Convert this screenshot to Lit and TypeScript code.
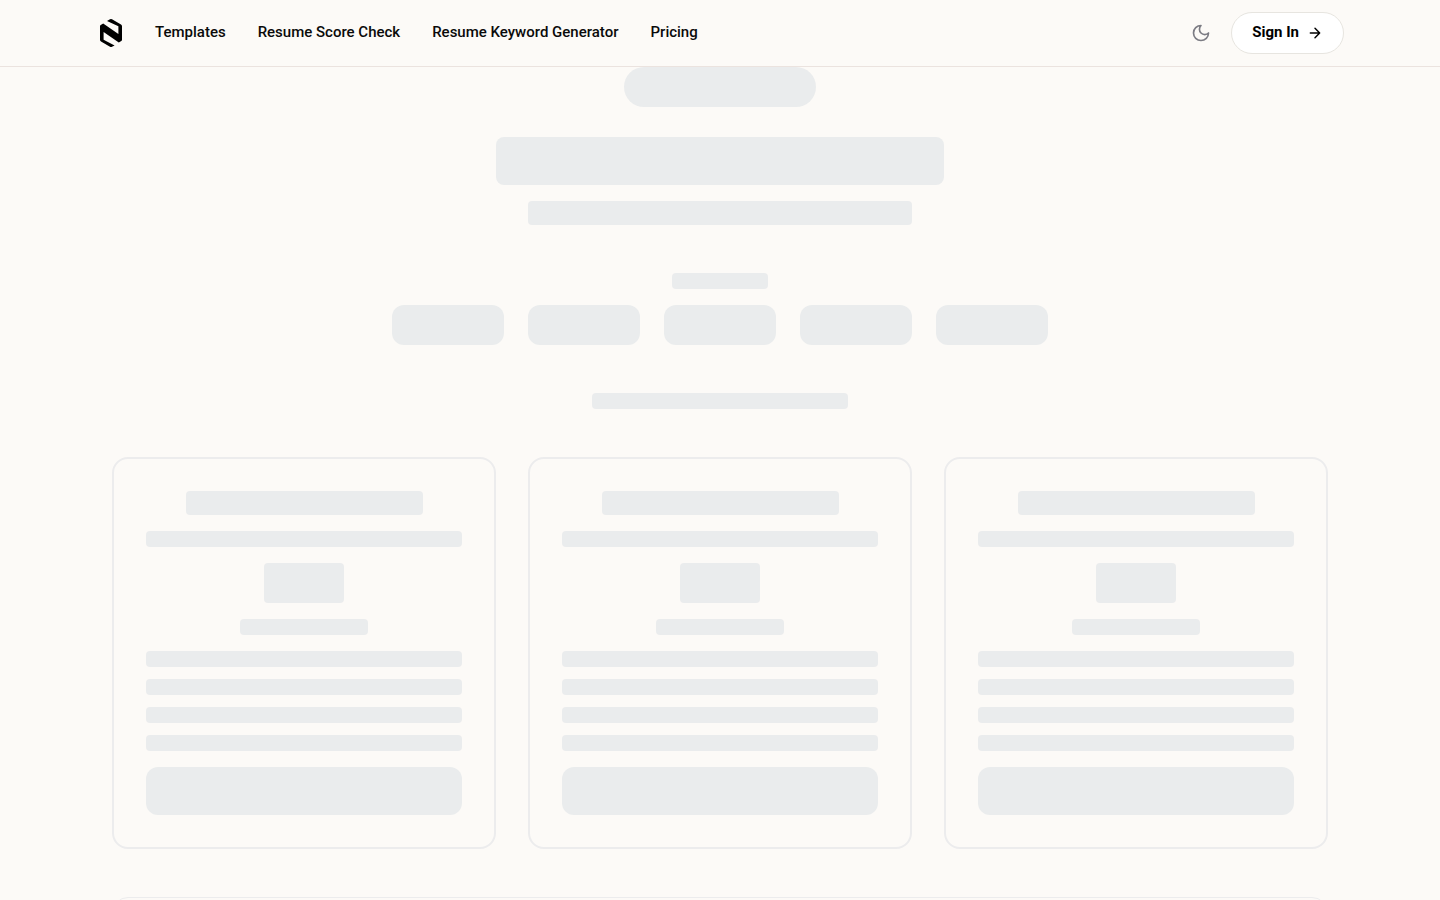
import { LitElement, html, css } from "lit";
import { customElement } from "lit/decorators.js";

const LINKS = ["Templates", "Resume Score Check", "Resume Keyword Generator", "Pricing"];

@customElement("site-header")
export class SiteHeader extends LitElement {
  static styles = css`
    :host {
      display: block;
      border-bottom: 1px solid #ebe3df;
      background: #fcfaf7;
    }
    .bar {
      box-sizing: border-box;
      display: flex;
      align-items: center;
      max-width: 1280px;
      margin: 0 auto;
      padding: 12px 16px;
    }
    .logo {
      display: flex;
      margin-right: 28px;
    }
    nav {
      display: flex;
      gap: 32px;
      flex: 1;
    }
    nav a {
      color: #0a0a0a;
      font-size: 15px;
      font-weight: 500;
      line-height: 22px;
      padding-bottom: 2px;
      text-decoration: none;
      white-space: nowrap;
    }
    .actions {
      display: flex;
      align-items: center;
      gap: 12px;
    }
    button {
      font: inherit;
      cursor: pointer;
    }
    .theme {
      display: flex;
      padding: 8px;
      border: 0;
      background: none;
      color: #7c7c84;
    }
    .signin {
      display: flex;
      align-items: center;
      gap: 8px;
      height: 42px;
      padding: 0 20px;
      border: 1px solid #e7e5e0;
      border-radius: 21px;
      background: #fff;
      color: #000;
      font-size: 15px;
      font-weight: 700;
    }
    .signin span {
      line-height: 22px;
      padding-bottom: 2px;
    }
  `;

  render() {
    return html`
      <div class="bar">
        <a class="logo" href="#" aria-label="Home">
          <svg width="31" height="30" viewBox="0 0 31 30" aria-hidden="true">
            <path d="M11 3.1 14 1.3Q15 .8 16 1.3L25 6.5Q26 7.1 26 8.2V21.8Q26 22.6 25.3 23L22.8 24.4 7.6 14V21.7L18.6 27.4 16 28.8Q15 29.3 14 28.8L5 23.5Q4 22.9 4 21.8V8.2Q4 7.4 4.7 7L7.2 5.6 22.4 16V8.3Z" />
          </svg>
        </a>
        <nav>${LINKS.map((label) => html`<a href="#">${label}</a>`)}</nav>
        <div class="actions">
          <button class="theme" aria-label="Toggle theme">
            <svg width="20" height="20" viewBox="0 0 24 24" fill="none" stroke="currentColor" stroke-width="2" stroke-linecap="round" stroke-linejoin="round">
              <path d="M12 3a6 6 0 0 0 9 9 9 9 0 1 1-9-9Z" />
            </svg>
          </button>
          <button class="signin">
            <span>Sign In</span>
            <svg width="16" height="16" viewBox="0 0 24 24" fill="none" stroke="currentColor" stroke-width="2.2" stroke-linecap="round" stroke-linejoin="round" aria-hidden="true">
              <path d="M5 12h14M12 5l7 7-7 7" />
            </svg>
          </button>
        </div>
      </div>
    `;
  }
}

@customElement("plan-skeleton")
export class PlanSkeleton extends LitElement {
  static styles = css`
    :host {
      display: flex;
      flex-direction: column;
      align-items: center;
      gap: 16px;
      padding: 32px;
      border: 2px solid #ececed;
      border-radius: 16px;
    }
    .bone {
      height: 16px;
      border-radius: 4px;
      background: #eaeced;
    }
    .name {
      width: 75%;
      height: 24px;
    }
    .line {
      width: 100%;
    }
    .price {
      width: 80px;
      height: 40px;
    }
    .note {
      width: 128px;
    }
    .features {
      display: grid;
      gap: 12px;
      width: 100%;
    }
    .action {
      width: 100%;
      height: 48px;
      border-radius: 12px;
    }
  `;

  render() {
    return html`
      <div class="bone name"></div>
      <div class="bone line"></div>
      <div class="bone price"></div>
      <div class="bone note"></div>
      <div class="features">${[1, 2, 3, 4].map(() => html`<div class="bone"></div>`)}</div>
      <div class="bone action"></div>
    `;
  }
}

@customElement("app-root")
export class AppRoot extends LitElement {
  static styles = css`
    :host {
      display: flex;
      flex-direction: column;
      height: 100vh;
      background: #fcfaf7;
      font-family: Roboto, sans-serif;
    }
    site-header {
      flex: none;
    }
    main {
      flex: 1;
      min-height: 0;
      overflow: auto;
      scrollbar-width: none;
    }
    .content {
      box-sizing: border-box;
      max-width: 1280px;
      margin: 0 auto;
      padding: 0 32px 48px;
    }
    .intro {
      display: flex;
      flex-direction: column;
      align-items: center;
    }
    .bone {
      height: 16px;
      border-radius: 4px;
      background: #eaeced;
    }
    .badge {
      width: 192px;
      height: 40px;
      border-radius: 20px;
      margin-bottom: 30px;
    }
    .title {
      width: 448px;
      height: 48px;
      border-radius: 8px;
      margin-bottom: 16px;
    }
    .subtitle {
      width: 384px;
      height: 24px;
      margin-bottom: 48px;
    }
    .label {
      width: 96px;
      margin-bottom: 16px;
    }
    .options {
      display: flex;
      flex-wrap: wrap;
      justify-content: center;
      gap: 24px;
      margin-bottom: 48px;
    }
    .option {
      width: 112px;
      height: 40px;
      border-radius: 12px;
    }
    .caption {
      width: 256px;
      margin-bottom: 48px;
    }
    .plans {
      display: grid;
      grid-template-columns: repeat(3, 1fr);
      gap: 32px;
      margin-bottom: 48px;
    }
    .comparison {
      height: 320px;
      border: 1px solid #ececed;
      border-radius: 16px;
    }
  `;

  render() {
    return html`
      <site-header></site-header>
      <main aria-busy="true">
        <div class="content">
          <div class="intro">
            <div class="bone badge"></div>
            <div class="bone title"></div>
            <div class="bone subtitle"></div>
            <div class="bone label"></div>
            <div class="options">${[1, 2, 3, 4, 5].map(() => html`<div class="bone option"></div>`)}</div>
            <div class="bone caption"></div>
          </div>
          <div class="plans">${[1, 2, 3].map(() => html`<plan-skeleton></plan-skeleton>`)}</div>
          <div class="comparison"></div>
        </div>
      </main>
    `;
  }
}
